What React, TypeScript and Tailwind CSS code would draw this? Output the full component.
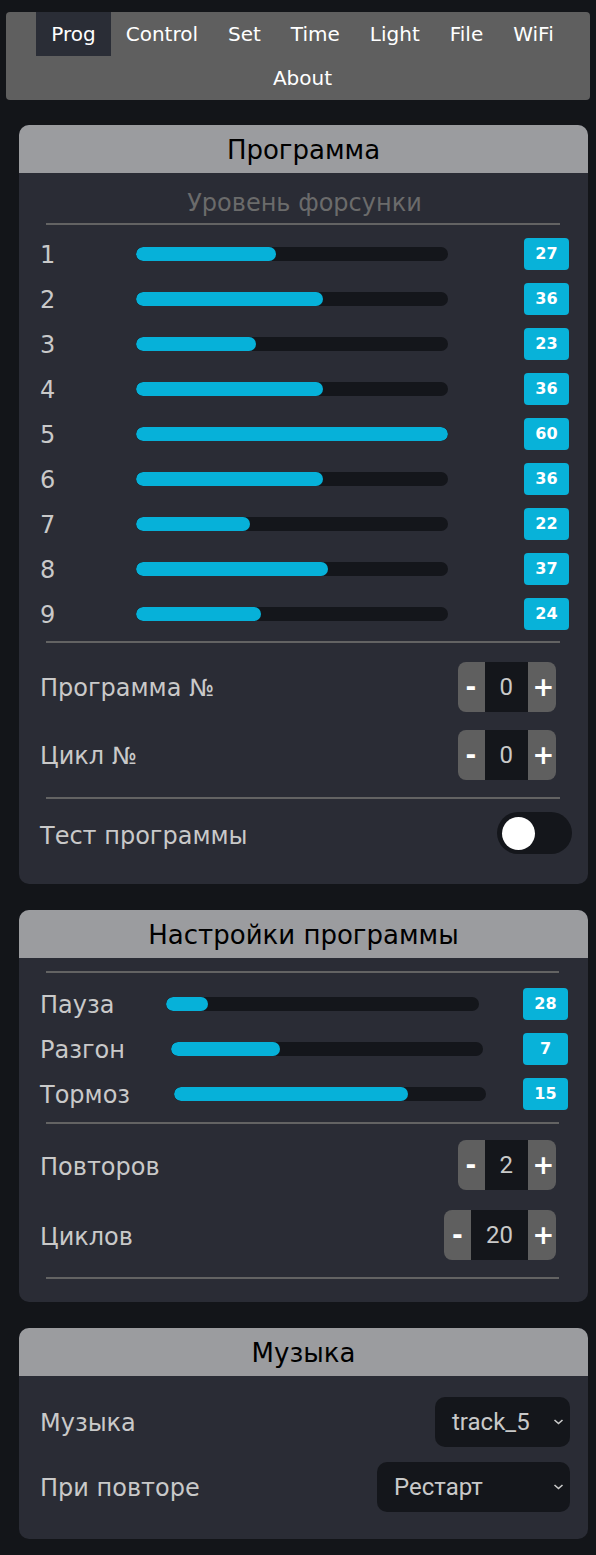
import React from "react"

const navItems = ["Prog", "Control", "Set", "Time", "Light", "File", "WiFi", "About"]

// injector levels, max 60
const injectors = [27, 36, 23, 36, 60, 36, 22, 37, 24]

function Badge({ value }: { value: number }) {
  return (
    <div className="ml-auto flex h-[32px] w-[45px] items-center justify-center rounded-[4px] bg-[#08b2d9] text-[16px] font-bold text-white">
      {value}
    </div>
  )
}

function Bar({ pct, className }: { pct: number; className: string }) {
  return (
    <div className={"h-[14px] overflow-hidden rounded-full bg-[#14161b] " + className}>
      <div className="h-full rounded-full bg-[#06b1d9]" style={{ width: pct + "%" }} />
    </div>
  )
}

function Stepper({ value }: { value: number }) {
  return (
    <div className="flex h-[50px] overflow-hidden rounded-[8px]">
      <div className="flex w-[27px] items-center justify-center bg-[#5f5f5f] text-[26px] font-bold text-white">-</div>
      <div className="flex items-center bg-[#14161b] px-[15px] font-['Roboto',sans-serif] text-[24px] text-[#c9c9c9]">
        {value}
      </div>
      <div className="flex w-[28px] items-center justify-center bg-[#5f5f5f] pl-[3px] text-[26px] font-bold text-white">+</div>
    </div>
  )
}

function Line({ className = "" }: { className?: string }) {
  return <div className={"ml-[6px] mr-[9px] h-[2px] bg-[#636363] " + className} />
}

function Card({ title, children, className = "" }: { title: string; children: React.ReactNode; className?: string }) {
  return (
    <section className={"ml-[19px] mr-[8px] overflow-hidden rounded-[10px] bg-[#2a2c35] " + className}>
      <h2 className="flex h-[48px] items-center justify-center bg-[#9b9c9f] pt-[2px] text-[26px] text-black">{title}</h2>
      {children}
    </section>
  )
}

function Chevron() {
  return (
    <svg width="11" height="7" viewBox="0 0 11 7" className="absolute right-[6px] top-1/2 -translate-y-1/2">
      <polyline points="1.5,1.5 5.5,5 9.5,1.5" fill="none" stroke="#c9c9c9" strokeWidth="1.6" />
    </svg>
  )
}

function Select({ value, className }: { value: string; className: string }) {
  return (
    <div className={"relative flex h-[50px] items-center rounded-[10px] bg-[#14161b] pl-[17px] font-['Roboto',sans-serif] text-[24px] text-[#c9c9c9] " + className}>
      {value}
      <Chevron />
    </div>
  )
}

export default function App() {
  const settings = [
    { label: "Пауза", value: 28, pct: (8 / 60) * 100, lw: "w-[126px]", bw: "w-[313px]" },
    { label: "Разгон", value: 7, pct: 35, lw: "w-[131px]", bw: "w-[312px]" },
    { label: "Тормоз", value: 15, pct: 75, lw: "w-[134px]", bw: "w-[312px]" },
  ]

  return (
    <div className="min-h-screen bg-[#131519] pt-[12px] pb-[17px] font-['DejaVu_Sans',sans-serif] text-[#c9c9c9]">
      <nav className="ml-[6px] mr-[6px] flex flex-wrap justify-center rounded-[4px] bg-[#5f5f5f] pl-[9px] text-[20px] text-white">
        {navItems.map((item) => (
          <a key={item} className={"flex h-[44px] items-center px-[15px] " + (item === "Prog" ? "bg-[#2a2d36]" : "")}>
            {item}
          </a>
        ))}
      </nav>

      <Card title="Программа" className="mt-[25px] pb-[30px]">
        <div className="pl-[21px] pr-[19px]">
          <p className="mt-[15px] flex h-[30px] items-center justify-center text-[24px] text-[#6b6b6b]">Уровень форсунки</p>
          <Line className="mt-[5px]" />
          <div className="mt-[6px]">
            {injectors.map((v, i) => (
              <div key={i} className="flex h-[45px] items-center">
                <span className="w-[96px] pt-[2px] text-[24px]">{i + 1}</span>
                <Bar pct={(v / 60) * 100} className="w-[312px]" />
                <Badge value={v} />
              </div>
            ))}
          </div>
          <Line className="mt-[5px]" />
          <div className="mt-[19px] flex h-[50px] items-center justify-between pr-[13px]">
            <span className="pt-[2px] text-[24px]">Программа №</span>
            <Stepper value={0} />
          </div>
          <div className="mt-[18px] flex h-[50px] items-center justify-between pr-[13px]">
            <span className="pt-[2px] text-[24px]">Цикл №</span>
            <Stepper value={0} />
          </div>
          <Line className="mt-[17px]" />
          <div className="mt-[13px] flex h-[42px] items-center justify-between">
            <span className="pt-[5px] text-[24px]">Тест программы</span>
            <div className="-mr-[3px] flex h-[42px] w-[75px] items-center rounded-full bg-[#14161b] pl-[5px]">
              <div className="h-[33px] w-[33px] rounded-full bg-white" />
            </div>
          </div>
        </div>
      </Card>

      <Card title="Настройки программы" className="mt-[26px] pb-[23px]">
        <div className="pl-[21px] pr-[20px]">
          <Line className="mt-[13px]" />
          <div className="mt-[8px]">
            {settings.map((s) => (
              <div key={s.label} className="flex h-[45px] items-center">
                <span className={"pt-[2px] text-[24px] " + s.lw}>{s.label}</span>
                <Bar pct={s.pct} className={s.bw} />
                <Badge value={s.value} />
              </div>
            ))}
          </div>
          <Line className="mt-[6px]" />
          <div className="mt-[16px] flex h-[50px] items-center justify-between pr-[12px]">
            <span className="pt-[3px] text-[24px]">Повторов</span>
            <Stepper value={2} />
          </div>
          <div className="mt-[20px] flex h-[50px] items-center justify-between pr-[12px]">
            <span className="pt-[3px] text-[24px]">Циклов</span>
            <Stepper value={20} />
          </div>
          <Line className="mt-[17px]" />
        </div>
      </Card>

      <Card title="Музыка" className="mt-[26px] pb-[27px]">
        <div className="pl-[21px] pr-[18px]">
          <div className="mt-[21px] flex h-[50px] items-center justify-between">
            <span className="pt-[2px] text-[24px]">Музыка</span>
            <Select value="track_5" className="w-[135px]" />
          </div>
          <div className="mt-[15px] flex h-[50px] items-center justify-between">
            <span className="pt-[2px] text-[24px]">При повторе</span>
            <Select value="Рестарт" className="w-[193px]" />
          </div>
        </div>
      </Card>
    </div>
  )
}
